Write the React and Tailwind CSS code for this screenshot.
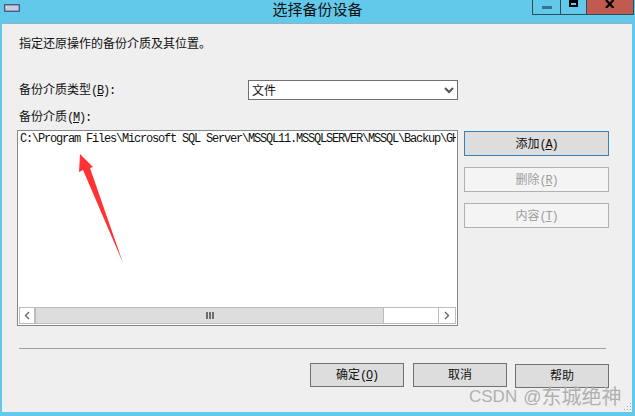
const cjk = "font-['Liberation_Sans','Noto_Sans_CJK_SC',sans-serif]"
const mono = "font-['Liberation_Mono',monospace] text-[12px] tracking-[-1.2px]"

// mnemonic suffix such as (A): latin is drawn at half the CJK width
const Key = ({ k, tail = "" }) => (
  <span className={mono}>
    (<span className="underline">{k}</span>){tail}
  </span>
)

const ActionButton = ({ label, k, disabled, active }) => (
  <button
    className={`h-[25px] w-[145px] border pt-[1px] text-[12px] ${
      active
        ? "border-[#3c7fb1] bg-[#dddddd] text-[#111111]"
        : disabled
        ? "border-[#adb2b5] bg-[#f4f4f4] text-[#9d9d9d]"
        : "border-[#707070] bg-[#dddddd] text-[#111111]"
    }`}
  >
    {label}
    <Key k={k} />
  </button>
)

const FooterButton = ({ label, k }) => (
  <button className="h-[24px] w-[94px] border border-[#707070] bg-[#dddddd] text-[12px] text-[#111111]">
    {label}
    {k && <Key k={k} />}
  </button>
)

const App = () => {
  return (
    <div className={`relative flex h-[416px] w-[635px] flex-col overflow-hidden bg-[#63c9eb] ${cjk}`}>
      {/* Title bar */}
      <header className="relative flex h-[23px] shrink-0 items-start">
        <svg className="ml-[4px] mt-[4px]" width="16" height="8" viewBox="0 0 16 8">
          <rect x="0.5" y="0.5" width="15" height="7" fill="#8f9dc4" stroke="#4c5a86" />
          <rect x="2" y="2" width="12" height="4" fill="#c4cde4" />
          <rect x="2" y="2" width="1" height="2" fill="#f4f4d0" />
          <rect x="4" y="2" width="1" height="2" fill="#e8d040" />
        </svg>
        <h1 className="absolute left-0 right-0 top-[-1px] text-center text-[15px] leading-[21px] text-[#111111]">
          选择备份设备
        </h1>
        <div className="absolute right-[1px] top-0 flex h-[15px] border border-t-0 border-[#2d4d5c]">
          <div className="flex w-[28px] items-center justify-center border-r border-[#2d4d5c]">
            <div className="h-[3px] w-[10px] bg-[#33738f]" />
          </div>
          <div className="flex w-[26px] items-start justify-center border-r border-[#2d4d5c]">
            <div className="h-[7px] w-[9px] border-2 border-t-[3px] border-black" />
          </div>
          <div className="flex w-[46px] items-start justify-center bg-[#c15b4f]">
            <svg width="10" height="8" viewBox="0 0 10 8">
              <path d="M1 0 L8.5 8 M8.5 0 L1 8" stroke="#000" strokeWidth="2.2" fill="none" />
            </svg>
          </div>
        </div>
      </header>

      {/* Client area */}
      <main className="ml-[2px] mr-[3px] flex h-[389px] flex-col border-t border-[#8fb3c4] bg-[#efefef] pl-[15px] pr-[23px] text-[#111111]">
        <p className="mt-[12px] pl-[2px] text-[12px] leading-[16px]">指定还原操作的备份介质及其位置。</p>

        <div className="mt-[28px] flex h-[20px] items-center">
          <label className="w-[231px] pl-[2px] pt-[1px] text-[12px]">
            备份介质类型
            <Key k="B" tail=":" />
          </label>
          <div className="flex h-[20px] w-[210px] items-center justify-between border border-[#707070] bg-white pl-[3px] pr-[3px] text-[12px]">
            <span className="pt-[1px]">文件</span>
            <svg width="10" height="7" viewBox="0 0 10 7">
              <path d="M1 1 L5 5 L9 1" stroke="#555" strokeWidth="2" fill="none" />
            </svg>
          </div>
        </div>

        <label className="mt-[9px] h-[21px] pl-[2px] text-[12px] leading-[16px]">
          备份介质
          <Key k="M" tail=":" />
        </label>

        <div className="flex items-start">
          {/* Media list */}
          <div className="flex h-[196px] w-[441px] flex-col border border-[#82878c] bg-white">
            <div className="mr-[1px] flex-1 overflow-hidden">
              <div className="whitespace-nowrap pl-[2px] pt-[1px] font-['Liberation_Mono',monospace] text-[12px] leading-[14px] tracking-[-1.2px] text-[#111111]">
                C:\Program Files\Microsoft SQL Server\MSSQL11.MSSQLSERVER\MSSQL\Backup\GH
              </div>
            </div>
            <div className="mx-[1px] mb-[1px] flex h-[17px] border border-[#bcbcbc] bg-white">
              <div className="flex w-[16px] items-center justify-center border-r-2 border-[#bcbcbc]">
                <svg width="6" height="9" viewBox="0 0 6 9">
                  <path d="M5 1 L1.5 4.5 L5 8" stroke="#666" strokeWidth="1.4" fill="none" />
                </svg>
              </div>
              <div className="flex w-[348px] items-center justify-center border-r border-[#bcbcbc] bg-[#dddddd]">
                <svg width="8" height="7" viewBox="0 0 8 7">
                  <path d="M0 0h2v7H0zM3 0h2v7H3zM6 0h2v7H6z" fill="#6e6e6e" />
                </svg>
              </div>
              <div className="flex-1" />
              <div className="flex w-[17px] items-center justify-center border-l border-[#bcbcbc]">
                <svg width="6" height="9" viewBox="0 0 6 9">
                  <path d="M1 1 L4.5 4.5 L1 8" stroke="#666" strokeWidth="1.4" fill="none" />
                </svg>
              </div>
            </div>
          </div>

          {/* Side buttons */}
          <div className="ml-[6px] mt-[1px] flex flex-col gap-[11px]">
            <ActionButton label="添加" k="A" active />
            <ActionButton label="删除" k="R" disabled />
            <ActionButton label="内容" k="T" disabled />
          </div>
        </div>

        <div className="ml-[2px] mr-[3px] mt-[22px] h-[1px] bg-[#a0a0a0]" />

        <div className="mt-[14px] flex gap-[9px] pl-[293px]">
          <FooterButton label="确定" k="O" />
          <FooterButton label="取消" />
          <div className="ml-[-1px]">
            <FooterButton label="帮助" />
          </div>
        </div>
      </main>

      {/* Annotation arrow */}
      <svg className="absolute left-0 top-0" width="635" height="416" viewBox="0 0 635 416">
        <polygon points="80,154 93,167 90,168 123,263 83,170 79,172" fill="#ff3333" />
      </svg>

      {/* Watermark */}
      <div className="absolute left-[469px] top-[385px] flex h-[24px] items-center whitespace-nowrap leading-[24px] text-[#b0b0b0]">
        <span className="text-[17px]">CSDN</span>
        <span className="ml-[6px] text-[18px]">@</span>
        <span className="text-[20px]">东城绝神</span>
      </div>

      {/* Size grip */}
      <svg className="absolute left-[623px] top-[402px]" width="9" height="9" viewBox="0 0 9 9">
        <path d="M7 1h1v1H7zM4 4h1v1H4zM7 4h1v1H7zM1 7h1v1H1zM4 7h1v1H4zM7 7h1v1H7z" fill="#a8a8a8" />
      </svg>
    </div>
  )
}

export default App
